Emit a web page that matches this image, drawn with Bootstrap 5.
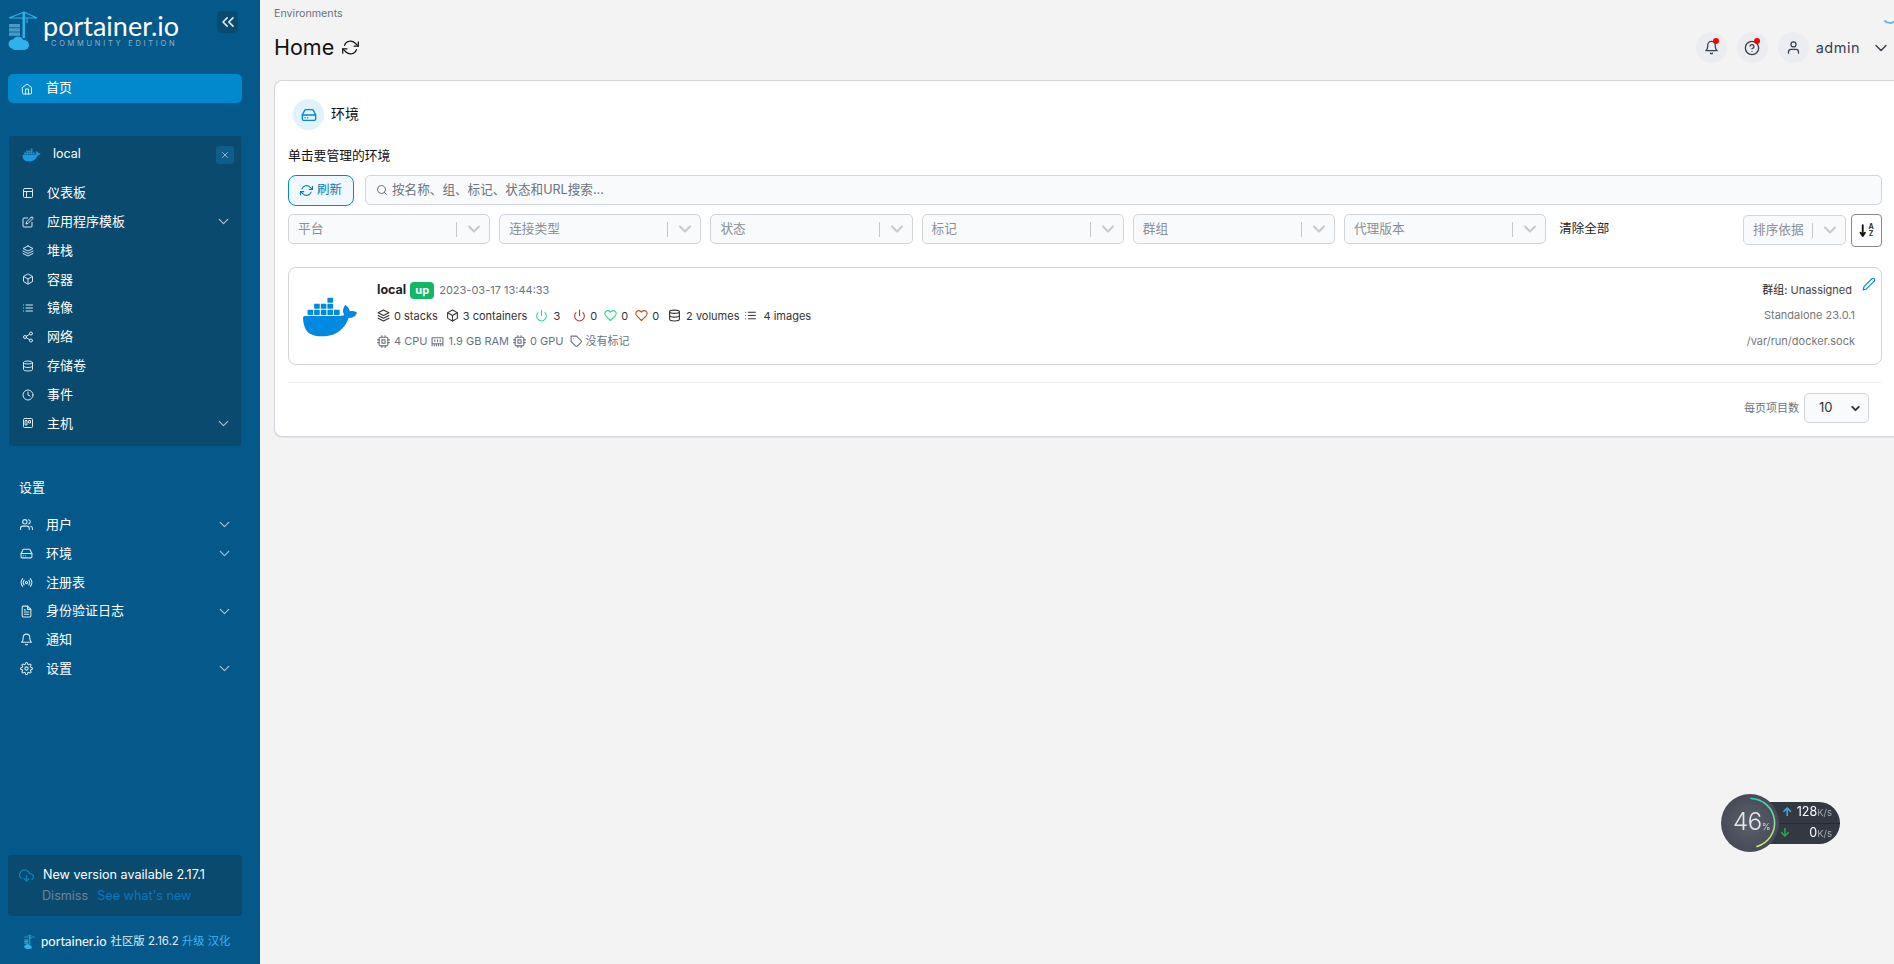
<!DOCTYPE html>
<html lang="zh">
<head>
<meta charset="utf-8">
<title>Portainer</title>
<link href="https://cdn.jsdelivr.net/npm/bootstrap@5.3.0/dist/css/bootstrap.min.css" rel="stylesheet">
<style>
html,body{height:100%;overflow:hidden}
body{font-family:Inter,"Noto Sans CJK SC",sans-serif;background:#f3f3f3;color:#111;font-size:12px}
svg.ic{fill:none;stroke:currentColor;stroke-width:2;stroke-linecap:round;stroke-linejoin:round;flex:none}
.shell{height:964px}
.side{width:260px;height:964px;background:#04598a;color:#fff;flex:none}
.brandrow{height:74px;padding:14px 22px 0 8px}
.brandlogo{margin-top:-3px}
.brandtxt{margin-left:5px;color:#fff;line-height:1}
.brandname{font-family:Lato,sans-serif;font-size:27px;line-height:24px;height:24px}
.brandsub{font-family:Inter,sans-serif;font-size:7.5px;letter-spacing:2.7px;color:#8fb0c6;margin:2px 0 0 8px;line-height:7px;white-space:nowrap}
.collapsebtn{width:21px;height:22px;background:#0a4a6e;border-radius:5px;margin-top:-3px;color:#dfe8ee}
.homeitem{height:29px;margin:0 18px 0 8px;background:#0288cc;border-radius:5px;font-size:13px;padding-bottom:2px}
.homeitem svg{margin:2px 13px 0 13px;color:#e6f1f7}
.envblock{margin:33px 19px 0 9px;height:310px;background:#0a4a6e;border-radius:3px;padding-top:2px}
.envhead{height:33px;padding:0 7px 0 12px;font-size:12.5px}
.envhead .nm{margin-left:11px}
.xbtn{width:18px;height:18px;background:#0f5d8a;border-radius:3px;color:#a9c2d2}
.envlist{margin-top:7.6px}
.rowlink{height:28.8px;font-size:13px;color:#fff;padding-left:13px;padding-right:9.5px}
.rowlink .ico{width:12px;height:12px;color:#dbe6ed;margin-right:13px}
.rowlink .chev{width:17px;height:17px;color:#a9c2d2;margin-left:auto;stroke-width:1.7}
.sethead{margin:32px 0 0 19px;font-size:13px;line-height:18px}
.setlist{margin-top:14.3px}
.setlist .rowlink{padding-left:20px;padding-right:27.5px}
.setlist .ico{width:13px;height:13px;margin-right:13px}
.updbox{margin:auto 18px 0 8px;height:61px;background:#0a4a6e;border-radius:4px;padding:11px 0 0 11px;font-size:12.6px}
.updbox .cloud{width:15px;height:15px;color:#0288cc;margin:1px 9px 0 0}
.updlinks{margin-top:2px;margin-left:-1px;font-size:12.6px}
.dim{color:#6f8494}
.linkb{color:#0877c2;margin-left:2px}
.sidefoot{height:48px;padding:4px 0 0 24px;font-size:11.4px;color:#e3ebf0;white-space:nowrap}
.sidefoot .pn{font-family:Lato,sans-serif;font-size:13px;margin:0 4px 0 6px;color:#fff}
.sidefoot .up{color:#3db4ef;margin-left:3px}
.mainarea{min-width:0;padding-left:14px}
.topbar{height:80px}
.crumb{font-size:10.7px;color:#6b7280;line-height:13px;padding-top:7px}
.pagettl{font-size:21.5px;line-height:30px;margin-top:12px;color:#111}
.topright{padding:32px 3px 0 0;color:#374151;gap:10px}
.circ{width:31px;height:31px;border-radius:50%;background:#ebedf0;position:relative}
.dot{position:absolute;width:6px;height:6px;background:#f00;border-radius:50%;top:6px;left:17px}
.admin{font-size:14.5px;letter-spacing:.5px;margin:0 11px 0 -3px}
.spin{position:absolute;top:5px;right:-5px;width:18px;height:19px;border:2px solid transparent;border-bottom-color:#6db5e6;border-right-color:#6db5e6;border-radius:50%}
.mcard{width:1620px;height:357px;border:1px solid #d1d5db;border-right:0;border-radius:8px 0 0 8px;background:#fff;padding:0 12px 0 13px;box-shadow:0 1px 1px rgba(0,0,0,.06)}
.chead{height:61px;padding:18px 0 0 5px;font-size:14px}
.cicon{width:31px;height:31px;border-radius:50%;background:#e0f2fe;color:#0288cc;margin-right:7px}
.subt{font-size:12.8px;line-height:18px;margin-top:5px}
.toolsrow{margin-top:10px;height:31px;gap:11px}
.refbtn{--bs-btn-padding-x:0;width:66px;height:31px;border:1px solid #0288cc;background:#f0f9ff;color:#0a77b8;border-radius:8px;font-size:12.5px;padding:0}
.searchbox{flex:1;height:30px;border:1px solid #d1d5db;border-radius:5px;background:#f9fafb;padding:0 10px;color:#6b7280;font-size:12.6px;gap:4px}
.filtrow{margin-top:8px;height:34px;gap:9px}
.fbox{width:202.2px;height:30px;border:1px solid #d1d5db;border-radius:5px;background:#f9fafb;color:#8b8f94;font-size:12.7px;padding:0 0 0 9px;flex:none}
.fsep{width:1px;height:15px;background:#c8c8c8;margin-left:auto}
svg.ic.fchev{width:20px;height:20px;color:#c9c9c9;margin:0 5px 0 7px;stroke-width:2.5}
.clearall{margin-left:4px;font-size:12.5px;color:#222;line-height:30px}
.sortsel{width:103px;margin-left:auto;margin-top:1px}
.sortbtn{width:31px;height:33px;border:1px solid #888;border-radius:4px;background:#fff;margin-left:-4px;color:#111;padding:0;gap:1px}
.azx{font-size:7px;font-weight:700;line-height:6.5px;color:#333}
.envitem{margin-top:19px;height:98px;border:1px solid #d1d5db;border-radius:8px;padding:0 23px 0 13px;position:relative}
.whale{width:54px;height:54px;color:#0089e0;margin:1px 1px 0 1px}
.einfo{margin-left:19px;font-size:11px;color:#333}
.eline{height:25.4px;white-space:nowrap}
.eline svg{width:13px;height:13px}
.ename{font-size:12.5px;font-weight:700;color:#222}
.upb{background:#10b866;color:#fff;font-size:11px;font-weight:700;padding:0;width:24px;text-align:center;height:17px;line-height:16px;border-radius:4px;margin:0 5px 0 4px}
.gray{color:#6b7280}
.edate{font-size:11px}
.eright{margin-left:auto;text-align:right;font-size:11px;color:#777}
.eright div{height:25.5px;line-height:25.5px;padding-right:3px}
.grp{color:#444;padding-right:6px!important}
.pen{position:absolute;top:9px;right:5px;width:14px;height:14px;color:#0288cc}
.cfoot{margin-top:17px;border-top:1px solid #f0f0f0;height:51px;padding-right:13px;font-size:11px;color:#6b7280}
.perpage{width:65px;height:30px;border:1px solid #d1d5db;border-radius:5px;background:#f9fafb;margin-left:5px;padding:0 0 0 14px;color:#333;font-size:13px}
.perpage svg{width:13px;height:13px;margin-left:auto;margin-right:6px;color:#333;stroke-width:3.5}
.netw{position:fixed;left:1720px;top:794px;width:122px;height:60px}
.netpill{position:absolute;left:28px;top:8px;width:92px;height:42px;border-radius:0 21px 21px 0;background:#333843;color:#fff;font-size:12.5px}
.netdiv{position:absolute;left:30px;right:0;top:21px;height:1px;background:#262a32}
.netln{position:absolute;right:8px;line-height:14px}
.netln small{font-size:9.5px;color:#a4aab4}
.netln b{font-size:12px}
.netgauge{position:absolute;left:1px;top:0;width:58px;height:58px}
.netnum{position:absolute;left:13px;top:14px;font-size:24px;color:#e6e7ea;font-weight:300;line-height:28px;letter-spacing:-.3px}
.netpct{font-size:9px;letter-spacing:0}
</style>
</head>
<body>
<svg width="0" height="0" class="position-absolute">
<defs>
<symbol id="i-home" viewBox="0 0 24 24"><path d="M3 9l9-7 9 7v11a2 2 0 0 1-2 2H5a2 2 0 0 1-2-2z"/><path d="M9 22V12h6v10"/></symbol>
<symbol id="i-layout" viewBox="0 0 24 24"><rect x="3" y="3" width="18" height="18" rx="2"/><path d="M3 9h18M9 21V9"/></symbol>
<symbol id="i-edit" viewBox="0 0 24 24"><path d="M11 4H4a2 2 0 0 0-2 2v14a2 2 0 0 0 2 2h14a2 2 0 0 0 2-2v-7"/><path d="M18.5 2.5a2.121 2.121 0 0 1 3 3L12 15l-4 1 1-4 9.5-9.5z"/></symbol>
<symbol id="i-layers" viewBox="0 0 24 24"><path d="M12 2 2 7l10 5 10-5-10-5zM2 17l10 5 10-5M2 12l10 5 10-5"/></symbol>
<symbol id="i-box" viewBox="0 0 24 24"><path d="M21 16V8a2 2 0 0 0-1-1.73l-7-4a2 2 0 0 0-2 0l-7 4A2 2 0 0 0 3 8v8a2 2 0 0 0 1 1.73l7 4a2 2 0 0 0 2 0l7-4A2 2 0 0 0 21 16z"/><path d="M3.27 6.96 12 12.01l8.73-5.05M12 22.08V12"/></symbol>
<symbol id="i-list" viewBox="0 0 24 24"><path d="M8 6h13M8 12h13M8 18h13M3 6h.01M3 12h.01M3 18h.01"/></symbol>
<symbol id="i-share" viewBox="0 0 24 24"><circle cx="18" cy="5" r="3"/><circle cx="6" cy="12" r="3"/><circle cx="18" cy="19" r="3"/><path d="M8.59 13.51l6.83 3.98M15.41 6.51l-6.82 3.98"/></symbol>
<symbol id="i-db" viewBox="0 0 24 24"><ellipse cx="12" cy="5" rx="9" ry="3"/><path d="M21 12c0 1.66-4 3-9 3s-9-1.34-9-3"/><path d="M3 5v14c0 1.66 4 3 9 3s9-1.34 9-3V5"/></symbol>
<symbol id="i-clock" viewBox="0 0 24 24"><circle cx="12" cy="12" r="10"/><path d="M12 6v6l4 2"/></symbol>
<symbol id="i-trello" viewBox="0 0 24 24"><rect x="3" y="3" width="18" height="18" rx="2"/><rect x="7" y="7" width="3" height="9"/><rect x="14" y="7" width="3" height="5"/></symbol>
<symbol id="i-users" viewBox="0 0 24 24"><path d="M17 21v-2a4 4 0 0 0-4-4H5a4 4 0 0 0-4 4v2"/><circle cx="9" cy="7" r="4"/><path d="M23 21v-2a4 4 0 0 0-3-3.87M16 3.13a4 4 0 0 1 0 7.75"/></symbol>
<symbol id="i-drive" viewBox="0 0 24 24"><path d="M22 12H2"/><path d="M5.45 5.11 2 12v6a2 2 0 0 0 2 2h16a2 2 0 0 0 2-2v-6l-3.45-6.89A2 2 0 0 0 16.76 4H7.24a2 2 0 0 0-1.79 1.11z"/><path d="M6 16h.01M10 16h.01"/></symbol>
<symbol id="i-radio" viewBox="0 0 24 24"><circle cx="12" cy="12" r="2"/><path d="M16.24 7.76a6 6 0 0 1 0 8.49m-8.48-.01a6 6 0 0 1 0-8.49m11.31-2.82a10 10 0 0 1 0 14.14m-14.14 0a10 10 0 0 1 0-14.14"/></symbol>
<symbol id="i-file" viewBox="0 0 24 24"><path d="M14 2H6a2 2 0 0 0-2 2v16a2 2 0 0 0 2 2h12a2 2 0 0 0 2-2V8z"/><path d="M14 2v6h6M16 13H8M16 17H8M10 9H8"/></symbol>
<symbol id="i-bell" viewBox="0 0 24 24"><path d="M18 8A6 6 0 0 0 6 8c0 7-3 9-3 9h18s-3-2-3-9"/><path d="M13.73 21a2 2 0 0 1-3.46 0"/></symbol>
<symbol id="i-gear" viewBox="0 0 24 24"><circle cx="12" cy="12" r="3"/><path d="M19.4 15a1.65 1.65 0 0 0 .33 1.82l.06.06a2 2 0 0 1 0 2.83 2 2 0 0 1-2.83 0l-.06-.06a1.65 1.65 0 0 0-1.82-.33 1.65 1.65 0 0 0-1 1.51V21a2 2 0 0 1-2 2 2 2 0 0 1-2-2v-.09A1.65 1.65 0 0 0 9 19.4a1.65 1.65 0 0 0-1.82.33l-.06.06a2 2 0 0 1-2.83 0 2 2 0 0 1 0-2.83l.06-.06a1.65 1.65 0 0 0 .33-1.82 1.65 1.65 0 0 0-1.51-1H3a2 2 0 0 1-2-2 2 2 0 0 1 2-2h.09A1.65 1.65 0 0 0 4.6 9a1.65 1.65 0 0 0-.33-1.82l-.06-.06a2 2 0 0 1 0-2.83 2 2 0 0 1 2.83 0l.06.06a1.65 1.65 0 0 0 1.82.33H9a1.65 1.65 0 0 0 1-1.51V3a2 2 0 0 1 2-2 2 2 0 0 1 2 2v.09a1.65 1.65 0 0 0 1 1.51 1.65 1.65 0 0 0 1.82-.33l.06-.06a2 2 0 0 1 2.83 0 2 2 0 0 1 0 2.83l-.06.06a1.65 1.65 0 0 0-.33 1.82V9a1.65 1.65 0 0 0 1.51 1H21a2 2 0 0 1 2 2 2 2 0 0 1-2 2h-.09a1.65 1.65 0 0 0-1.51 1z"/></symbol>
<symbol id="i-refresh" viewBox="0 0 24 24"><path d="M23 4v6h-6M1 20v-6h6"/><path d="M3.51 9a9 9 0 0 1 14.85-3.36L23 10M1 14l4.64 4.36A9 9 0 0 0 20.49 15"/></symbol>
<symbol id="i-search" viewBox="0 0 24 24"><circle cx="11" cy="11" r="8"/><path d="M21 21l-4.35-4.35"/></symbol>
<symbol id="i-chev" viewBox="0 0 24 24"><path d="M6 9l6 6 6-6"/></symbol>
<symbol id="i-chevl" viewBox="0 0 24 24"><path d="M11 17l-5-5 5-5M18 17l-5-5 5-5"/></symbol>
<symbol id="i-x" viewBox="0 0 24 24"><path d="M18 6 6 18M6 6l12 12"/></symbol>
<symbol id="i-power" viewBox="0 0 24 24"><path d="M18.36 6.64a9 9 0 1 1-12.73 0M12 2v10"/></symbol>
<symbol id="i-heart" viewBox="0 0 24 24"><path d="M20.84 4.61a5.5 5.5 0 0 0-7.78 0L12 5.67l-1.06-1.06a5.5 5.5 0 0 0-7.78 7.78l1.06 1.06L12 21.23l7.78-7.78 1.06-1.06a5.5 5.5 0 0 0 0-7.78z"/></symbol>
<symbol id="i-cpu" viewBox="0 0 24 24"><rect x="4" y="4" width="16" height="16" rx="2"/><rect x="9" y="9" width="6" height="6"/><path d="M9 1v3M15 1v3M9 20v3M15 20v3M20 9h3M20 14h3M1 9h3M1 14h3"/></symbol>
<symbol id="i-mem" viewBox="0 0 24 24"><path d="M2 5h20v11H2zM2 20v-4M22 20v-4M6 20v-4M10 20v-4M14 20v-4M18 20v-4M7 9v3M12 9v3M17 9v3"/></symbol>
<symbol id="i-tag" viewBox="0 0 24 24"><path d="M20.59 13.41l-7.17 7.17a2 2 0 0 1-2.83 0L2 12V2h10l8.59 8.59a2 2 0 0 1 0 2.82z"/><path d="M7 7h.01"/></symbol>
<symbol id="i-pen" viewBox="0 0 24 24"><path d="M17 3a2.828 2.828 0 1 1 4 4L7.5 20.5 2 22l1.5-5.5L17 3z"/></symbol>
<symbol id="i-help" viewBox="0 0 24 24"><circle cx="12" cy="12" r="10"/><path d="M9.09 9a3 3 0 0 1 5.83 1c0 2-3 3-3 3M12 17h.01"/></symbol>
<symbol id="i-user" viewBox="0 0 24 24"><path d="M20 21v-2a4 4 0 0 0-4-4H8a4 4 0 0 0-4 4v2"/><circle cx="12" cy="7" r="4"/></symbol>
<symbol id="i-cloud" viewBox="0 0 24 24"><path d="M8 17l4 4 4-4M12 12v9"/><path d="M20.88 18.09A5 5 0 0 0 18 9h-1.26A8 8 0 1 0 3 16.29"/></symbol>
<symbol id="i-docker" viewBox="0 0 24 24"><path fill="currentColor" stroke="none" d="M13.983 11.078h2.119a.186.186 0 00.186-.185V9.006a.186.186 0 00-.186-.186h-2.119a.185.185 0 00-.185.185v1.888c0 .102.083.185.185.185m-2.954-5.43h2.118a.186.186 0 00.186-.186V3.574a.186.186 0 00-.186-.185h-2.118a.185.185 0 00-.185.185v1.888c0 .102.082.185.185.186m0 2.716h2.118a.187.187 0 00.186-.186V6.29a.186.186 0 00-.186-.185h-2.118a.185.185 0 00-.185.185v1.887c0 .102.082.185.185.186m-2.93 0h2.12a.186.186 0 00.184-.186V6.29a.185.185 0 00-.185-.185H8.1a.185.185 0 00-.185.185v1.887c0 .102.083.185.185.186m-2.964 0h2.119a.186.186 0 00.185-.186V6.29a.185.185 0 00-.185-.185H5.136a.186.186 0 00-.186.185v1.887c0 .102.084.185.186.186m5.893 2.715h2.118a.186.186 0 00.186-.185V9.006a.186.186 0 00-.186-.186h-2.118a.185.185 0 00-.185.185v1.888c0 .102.082.185.185.185m-2.93 0h2.12a.185.185 0 00.184-.185V9.006a.185.185 0 00-.184-.186h-2.12a.185.185 0 00-.184.185v1.888c0 .102.083.185.185.185m-2.964 0h2.119a.185.185 0 00.185-.185V9.006a.185.185 0 00-.184-.186h-2.12a.186.186 0 00-.186.186v1.887c0 .102.084.185.186.185m-2.92 0h2.12a.185.185 0 00.184-.185V9.006a.185.185 0 00-.184-.186h-2.12a.185.185 0 00-.184.185v1.888c0 .102.082.185.185.185M23.763 9.89c-.065-.051-.672-.51-1.954-.51-.338.001-.676.03-1.01.087-.248-1.7-1.653-2.53-1.716-2.566l-.344-.199-.226.327c-.284.438-.49.922-.612 1.43-.23.97-.09 1.882.403 2.661-.595.332-1.55.413-1.744.42H.751a.751.751 0 00-.75.748 11.376 11.376 0 00.692 4.062c.545 1.428 1.355 2.48 2.41 3.124 1.18.723 3.1 1.137 5.275 1.137.983.003 1.963-.086 2.93-.266a12.248 12.248 0 003.823-1.389c.98-.567 1.86-1.288 2.61-2.136 1.252-1.418 1.998-2.997 2.553-4.4h.221c1.372 0 2.215-.549 2.68-1.009.309-.293.55-.65.707-1.046l.098-.288Z"/></symbol>
<symbol id="i-logo" viewBox="0 0 30 40"><g fill="none" stroke="#2fb1ec" stroke-width="1.2"><path d="M1 7h28M16 1 1 7M16 1l13 6M19 7v5"/></g><g fill="#4a9cc6"><rect x="1" y="13" width="11" height="3.4"/><rect x="1" y="17.2" width="11" height="3.4"/><rect x="1" y="21.4" width="11" height="3.4"/></g><g fill="#2fb1ec"><rect x="14.5" y="1" width="2.6" height="26"/><circle cx="5" cy="33" r="4.5"/><circle cx="10" cy="31" r="5.5"/><circle cx="16" cy="34" r="5"/><rect x="4" y="33" width="12" height="6" rx="3"/></g></symbol>
</defs>
</svg>
<div class="shell d-flex">
  <aside class="side d-flex flex-column">
    <div class="brandrow d-flex align-items-start">
      <svg class="brandlogo" width="30" height="40"><use href="#i-logo"/></svg>
      <div class="brandtxt flex-grow-1">
        <div class="brandname">portainer.io</div>
        <div class="brandsub">COMMUNITY EDITION</div>
      </div>
      <div class="collapsebtn d-flex align-items-center justify-content-center"><svg class="ic" width="20" height="20"><use href="#i-chevl"/></svg></div>
    </div>
    <div class="homeitem d-flex align-items-center"><svg class="ic" width="12" height="12"><use href="#i-home"/></svg>首页</div>
    <div class="envblock">
      <div class="envhead d-flex align-items-center">
        <svg class="ic" width="21" height="18" style="color:#1a98e0"><use href="#i-docker"/></svg>
        <span class="nm">local</span>
        <span class="xbtn ms-auto d-flex align-items-center justify-content-center"><svg class="ic" width="10" height="10"><use href="#i-x"/></svg></span>
      </div>
      <div class="envlist">
        <div class="rowlink d-flex align-items-center"><svg class="ic ico"><use href="#i-layout"/></svg>仪表板</div>
        <div class="rowlink d-flex align-items-center"><svg class="ic ico"><use href="#i-edit"/></svg>应用程序模板<svg class="ic chev"><use href="#i-chev"/></svg></div>
        <div class="rowlink d-flex align-items-center"><svg class="ic ico"><use href="#i-layers"/></svg>堆栈</div>
        <div class="rowlink d-flex align-items-center"><svg class="ic ico"><use href="#i-box"/></svg>容器</div>
        <div class="rowlink d-flex align-items-center"><svg class="ic ico"><use href="#i-list"/></svg>镜像</div>
        <div class="rowlink d-flex align-items-center"><svg class="ic ico"><use href="#i-share"/></svg>网络</div>
        <div class="rowlink d-flex align-items-center"><svg class="ic ico"><use href="#i-db"/></svg>存储卷</div>
        <div class="rowlink d-flex align-items-center"><svg class="ic ico"><use href="#i-clock"/></svg>事件</div>
        <div class="rowlink d-flex align-items-center"><svg class="ic ico"><use href="#i-trello"/></svg>主机<svg class="ic chev"><use href="#i-chev"/></svg></div>
      </div>
    </div>
    <div class="sethead">设置</div>
    <div class="setlist">
      <div class="rowlink d-flex align-items-center"><svg class="ic ico"><use href="#i-users"/></svg>用户<svg class="ic chev"><use href="#i-chev"/></svg></div>
      <div class="rowlink d-flex align-items-center"><svg class="ic ico"><use href="#i-drive"/></svg>环境<svg class="ic chev"><use href="#i-chev"/></svg></div>
      <div class="rowlink d-flex align-items-center"><svg class="ic ico"><use href="#i-radio"/></svg>注册表</div>
      <div class="rowlink d-flex align-items-center"><svg class="ic ico"><use href="#i-file"/></svg>身份验证日志<svg class="ic chev"><use href="#i-chev"/></svg></div>
      <div class="rowlink d-flex align-items-center"><svg class="ic ico"><use href="#i-bell"/></svg>通知</div>
      <div class="rowlink d-flex align-items-center"><svg class="ic ico"><use href="#i-gear"/></svg>设置<svg class="ic chev"><use href="#i-chev"/></svg></div>
    </div>
    <div class="updbox">
      <div class="d-flex align-items-center"><svg class="ic cloud"><use href="#i-cloud"/></svg>New version available 2.17.1</div>
      <div class="updlinks ps-4"><span class="dim">Dismiss</span>&nbsp; <span class="linkb">See what's new</span></div>
    </div>
    <div class="sidefoot d-flex align-items-center">
      <svg width="11" height="20"><use href="#i-logo"/></svg>
      <span class="pn">portainer.io</span>社区版 2.16.2<span class="up">升级 汉化</span>
    </div>
  </aside>
  <main class="mainarea flex-grow-1 position-relative">
    <div class="topbar d-flex justify-content-between">
      <div>
        <div class="crumb">Environments</div>
        <div class="pagettl d-flex align-items-center">Home<svg class="ic ms-2" width="17" height="17" style="stroke-width:1.7"><use href="#i-refresh"/></svg></div>
      </div>
      <div class="topright d-flex align-items-start">
        <div class="circ d-flex align-items-center justify-content-center"><svg class="ic" width="15" height="15"><use href="#i-bell"/></svg><span class="dot"></span></div>
        <div class="circ d-flex align-items-center justify-content-center"><svg class="ic" width="16" height="16"><use href="#i-help"/></svg><span class="dot"></span></div>
        <div class="circ d-flex align-items-center justify-content-center"><svg class="ic" width="15" height="15"><use href="#i-user"/></svg></div>
        <div class="d-flex align-items-center" style="height:31px"><span class="admin">admin</span><svg class="ic" width="20" height="20" style="stroke-width:1.7"><use href="#i-chev"/></svg></div>
      </div>
      <span class="spin"></span>
    </div>
    <section class="mcard">
      <div class="chead d-flex align-items-start">
        <span class="cicon d-flex align-items-center justify-content-center"><svg class="ic" width="16" height="16"><use href="#i-drive"/></svg></span>
        <span style="line-height:29px">环境</span>
      </div>
      <div class="subt">单击要管理的环境</div>
      <div class="toolsrow d-flex">
        <button class="btn refbtn d-flex align-items-center justify-content-center gap-1" type="button"><svg class="ic" width="13" height="13"><use href="#i-refresh"/></svg>刷新</button>
        <div class="searchbox d-flex align-items-center"><svg class="ic" width="12" height="12"><use href="#i-search"/></svg>按名称、组、标记、状态和URL搜索...</div>
      </div>
      <div class="filtrow d-flex align-items-start">
        <div class="fbox d-flex align-items-center">平台<span class="fsep"></span><svg class="ic fchev"><use href="#i-chev"/></svg></div>
        <div class="fbox d-flex align-items-center">连接类型<span class="fsep"></span><svg class="ic fchev"><use href="#i-chev"/></svg></div>
        <div class="fbox d-flex align-items-center">状态<span class="fsep"></span><svg class="ic fchev"><use href="#i-chev"/></svg></div>
        <div class="fbox d-flex align-items-center">标记<span class="fsep"></span><svg class="ic fchev"><use href="#i-chev"/></svg></div>
        <div class="fbox d-flex align-items-center">群组<span class="fsep"></span><svg class="ic fchev"><use href="#i-chev"/></svg></div>
        <div class="fbox d-flex align-items-center">代理版本<span class="fsep"></span><svg class="ic fchev"><use href="#i-chev"/></svg></div>
        <div class="clearall">清除全部</div>
        <div class="fbox sortsel d-flex align-items-center">排序依据<span class="fsep"></span><svg class="ic fchev"><use href="#i-chev"/></svg></div>
        <button class="btn sortbtn d-flex align-items-center justify-content-center" type="button"><svg class="ic" width="8" height="13" viewBox="0 0 11 24" style="stroke-width:3.4"><path d="M5 2v20M1 16l4 6 4-6"/></svg><span class="azx text-center">A<br>Z</span></button>
      </div>
      <div class="envitem d-flex align-items-center">
        <svg class="ic whale"><use href="#i-docker"/></svg>
        <div class="einfo">
          <div class="eline d-flex align-items-center"><span class="ename">local</span><span class="upb ms-1">up</span><span class="gray edate">2023-03-17 13:44:33</span></div>
          <div class="eline d-flex align-items-center">
            <svg class="ic me-1"><use href="#i-layers"/></svg><span>0 stacks</span>
            <svg class="ic ms-2 me-1"><use href="#i-box"/></svg><span>3 containers</span>
            <svg class="ic ms-2" style="color:#34d399;margin-right:5px"><use href="#i-power"/></svg><span>3</span>
            <svg class="ic" style="color:#c0392b;margin:0 4px 0 13px"><use href="#i-power"/></svg><span>0</span>
            <svg class="ic" style="color:#34d399;margin:0 4px 0 7px"><use href="#i-heart"/></svg><span>0</span>
            <svg class="ic" style="color:#c2531d;margin:0 4px 0 7px"><use href="#i-heart"/></svg><span>0</span>
            <svg class="ic" style="margin:0 5px 0 9px"><use href="#i-db"/></svg><span>2 volumes</span>
            <svg class="ic" style="margin:0 6px 0 5px"><use href="#i-list"/></svg><span>4 images</span>
          </div>
          <div class="eline d-flex align-items-center gray">
            <svg class="ic me-1"><use href="#i-cpu"/></svg><span>4 CPU</span>
            <svg class="ic" style="margin:0 4px 0 4px"><use href="#i-mem"/></svg><span>1.9 GB RAM</span>
            <svg class="ic" style="margin:0 4px"><use href="#i-cpu"/></svg><span>0 GPU</span>
            <svg class="ic" style="margin:0 3px 0 6px"><use href="#i-tag"/></svg><span>没有标记</span>
          </div>
        </div>
        <div class="eright">
          <div class="grp"><span style="color:#222">群组:</span> Unassigned</div>
          <div>Standalone 23.0.1</div>
          <div>/var/run/docker.sock</div>
        </div>
        <svg class="ic pen"><use href="#i-pen"/></svg>
      </div>
      <div class="cfoot d-flex align-items-center justify-content-end">每页项目数
        <div class="perpage d-flex align-items-center">10<svg class="ic"><use href="#i-chev"/></svg></div>
      </div>
    </section>
  </main>
</div>
<div class="netw">
  <div class="netpill">
    <div class="netdiv"></div>
    <div class="netln" style="top:3px"><b style="color:#3db4ef;margin-right:4px">↑</b>128<small>K/s</small></div>
    <div class="netln" style="top:24px"><b style="color:#22b14c;margin-right:19px">↓</b>0<small>K/s</small></div>
  </div>
  <svg class="netgauge" viewBox="0 0 58 58">
    <defs><linearGradient id="gg" x1="0" y1="0" x2="0" y2="1"><stop offset="0" stop-color="#2dd4bf"/><stop offset="1" stop-color="#d9e66a"/></linearGradient><radialGradient id="gb"><stop offset="0" stop-color="#5b606d"/><stop offset="1" stop-color="#474b57"/></radialGradient></defs>
    <circle cx="29" cy="29" r="29" fill="url(#gb)"/>
    <path d="M30 4.5A24.5 24.5 0 0 1 36 52.5" fill="none" stroke="url(#gg)" stroke-width="1.6" stroke-linecap="round"/>
  </svg>
  <div class="netnum">46<span class="netpct">%</span></div>
</div>
<script src="https://cdn.jsdelivr.net/npm/bootstrap@5.3.0/dist/js/bootstrap.bundle.min.js"></script>
</body>
</html>
